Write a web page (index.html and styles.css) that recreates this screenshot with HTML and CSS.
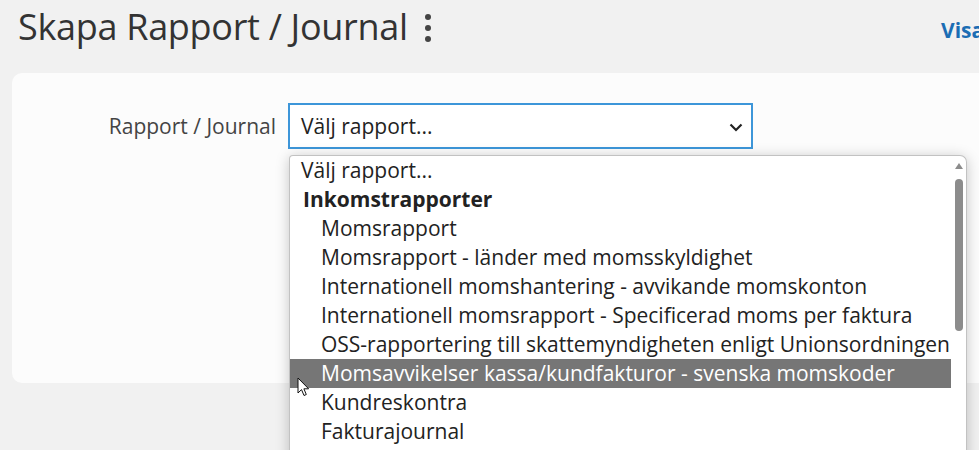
FILE: index.html
```html
<!DOCTYPE html>
<html lang="sv">

<head>
    <meta charset="UTF-8">
    <meta name="viewport" content="width=device-width, initial-scale=1.0">
    <title>Skapa Rapport / Journal</title>
    <link rel="stylesheet" href="styles.css">
</head>

<body>
    <div class="page">
        <div class="header">
            <div class="title">
                <h1>Skapa Rapport / Journal</h1>
                <span class="kebab"><i></i><i></i><i></i></span>
            </div>
            <a class="show-link" href="#">Visa rapporter</a>
        </div>

        <div class="card">
            <div class="row">
                <label class="row-label" for="report">Rapport / Journal</label>
                <div class="select-wrap">
                    <div class="select" id="report">
                        <span>Välj rapport...</span>
                        <svg class="arrow" width="14" height="9" viewBox="0 0 14 9">
                            <path d="M1.5 1.5 L7 7 L12.5 1.5" fill="none" stroke="#222" stroke-width="2.2" />
                        </svg>
                    </div>

                    <div class="dropdown">
                        <ul class="options">
                            <li class="opt">Välj rapport...</li>
                            <li class="group">Inkomstrapporter</li>
                            <li class="opt sub">Momsrapport</li>
                            <li class="opt sub">Momsrapport - länder med momsskyldighet</li>
                            <li class="opt sub">Internationell momshantering - avvikande momskonton</li>
                            <li class="opt sub">Internationell momsrapport - Specificerad moms per faktura</li>
                            <li class="opt sub">OSS-rapportering till skattemyndigheten enligt Unionsordningen</li>
                            <li class="opt sub active">Momsavvikelser kassa/kundfakturor - svenska momskoder</li>
                            <li class="opt sub">Kundreskontra</li>
                            <li class="opt sub">Fakturajournal</li>
                        </ul>
                        <div class="scrollbar">
                            <span class="up"></span>
                            <span class="thumb"></span>
                        </div>
                    </div>
                </div>
            </div>
        </div>
    </div>

    <svg class="cursor" width="13" height="21" viewBox="0 0 13 21">
        <path d="M1 1 L1 16 L4.5 12.6 L7 18.5 L9.3 17.5 L6.9 11.8 L11.6 11.8 Z" fill="#fff" stroke="#111"
            stroke-width="1" stroke-linejoin="round" />
    </svg>
</body>

</html>
```

FILE: styles.css
```css
body {
    margin: 0;
    background-color: #f1f1f1;
    font-family: "Open Sans", "DejaVu Sans", sans-serif;
    color: #333;
    overflow: hidden;
    height: 450px;
}

.page {
    width: 1200px;
}

.header {
    display: grid;
    grid-template-columns: 923px auto;
    align-items: center;
    padding: 3px 0 0 18px;
    height: 65px;
    box-sizing: border-box;
    align-content: start;
}

.title {
    display: flex;
    align-items: center;
    gap: 17px;
}

h1 {
    margin: 0;
    font-size: 36px;
    font-weight: 400;
    line-height: 48px;
    color: #333;
    letter-spacing: -0.3px;
}

.kebab {
    display: flex;
    flex-direction: column;
    gap: 5px;
    padding-top: 2px;
}

.kebab i {
    display: block;
    width: 6px;
    height: 6px;
    border-radius: 50%;
    background-color: #444;
}

.show-link {
    font-size: 21px;
    font-weight: 700;
    color: #1b6db4;
    text-decoration: none;
    padding-top: 6px;
}

.card {
    margin: 8px 0 0 12px;
    height: 310px;
    background-color: #fcfcfc;
    border-radius: 10px;
    padding-top: 30px;
    box-sizing: border-box;
}

.row {
    display: grid;
    grid-template-columns: 264px 465px;
    column-gap: 12px;
    align-items: center;
}

.row-label {
    text-align: right;
    font-size: 21px;
    color: #444;
}

.select-wrap {
    position: relative;
}

.select {
    display: flex;
    align-items: center;
    justify-content: space-between;
    height: 46px;
    box-sizing: border-box;
    border: 2px solid #3d96d9;
    background-color: #fff;
    padding: 0 8px 0 11px;
    font-size: 21px;
    color: #222;
}

.arrow {
    margin-top: 2px;
}

.dropdown {
    position: absolute;
    top: calc(100% + 6px);
    left: 1px;
    width: 678px;
    height: 330px;
    box-sizing: border-box;
    display: flex;
    background-color: #fff;
    border: 1px solid #c2c2c2;
    border-bottom: none;
    border-radius: 4px 7px 0 0;
    box-shadow: 0 2px 14px rgba(0, 0, 0, 0.22);
    overflow: hidden;
}

.options {
    list-style: none;
    margin: 0;
    padding: 0;
    flex: 1;
}

.options li {
    height: 29px;
    line-height: 29px;
    font-size: 21px;
    color: #222;
    white-space: nowrap;
    padding-left: 11px;
}

.options .group {
    font-weight: 700;
    padding-left: 13px;
}

.options .sub {
    padding-left: 31px;
}

.options .active {
    background-color: #767676;
    color: #fff;
}

.scrollbar {
    width: 15px;
    position: relative;
    display: flex;
    flex-direction: column;
    align-items: center;
}

.scrollbar .up {
    margin-top: 7px;
    width: 0;
    height: 0;
    border-left: 4.5px solid transparent;
    border-right: 4.5px solid transparent;
    border-bottom: 6px solid #8c8c8c;
}

.scrollbar .thumb {
    margin-top: 10px;
    width: 8px;
    height: 152px;
    border-radius: 4px;
    background-color: #8c8c8c;
}

.cursor {
    position: absolute;
    left: 297px;
    top: 377px;
}
```
